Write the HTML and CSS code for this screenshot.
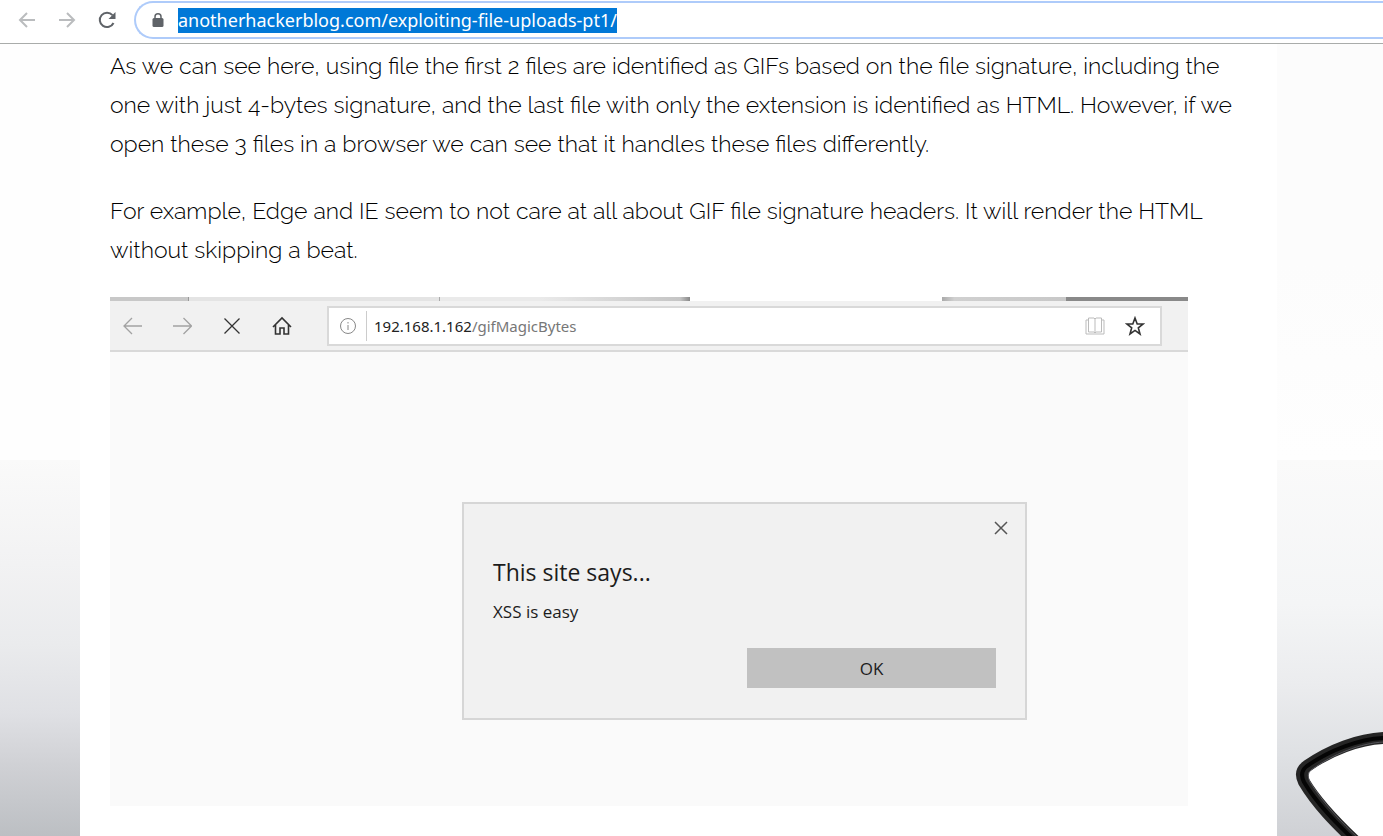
FILE: index.html
```html
<!DOCTYPE html>
<html lang="en">
<head>
<meta charset="utf-8">
<meta name="viewport" content="width=device-width, initial-scale=1">
<title>Exploiting File Uploads Pt. 1</title>
<link rel="stylesheet" href="styles.css">
</head>
<body>
<header class="browser-bar">
  <nav class="browser-nav" aria-label="Browser">
    <button class="icon-button muted" type="button" aria-label="Back"><svg width="18" height="18" viewBox="0 0 18 18"><path d="M17 9H2M9 2L2 9l7 7"/></svg></button>
    <button class="icon-button muted" type="button" aria-label="Forward"><svg width="18" height="18" viewBox="0 0 18 18"><path d="M1 9h15M9 2l7 7-7 7"/></svg></button>
    <button class="icon-button" type="button" aria-label="Reload"><svg width="18" height="18" viewBox="0 0 18 18"><path d="M15.500 12A7.200 7.200 0 1 1 14.500 4.200"/><path class="solid" d="M17.500 1v7h-7z"/></svg></button>
  </nav>
  <div class="omnibox">
    <svg class="lock" width="12" height="14" viewBox="0 0 12 14"><rect x="0.500" y="5" width="11" height="9" rx="1.500" fill="#5f6368"/><path d="M3 6V3.800a3 3 0 0 1 6 0V6" fill="none" stroke="#5f6368" stroke-width="1.500"/></svg>
    <input class="address" type="text" aria-label="Address" value="anotherhackerblog.com/exploiting-file-uploads-pt1/" spellcheck="false" autofocus>
  </div>
</header>
<div class="page">
  <div class="backdrop backdrop-left"></div>
  <main class="article">
    <p>As we can see here, using file the first 2 files are identified as GIFs based on the file signature, including the<br>one with just 4-bytes signature, and the last file with only the extension is identified as HTML. However, if we<br>open these 3 files in a browser we can see that it handles these files differently.</p>
    <p>For example, Edge and IE seem to not care at all about GIF file signature headers. It will render the HTML<br>without skipping a beat.</p>
    <section class="edge" aria-label="Edge window">
      <div class="edge-tabs"><i class="tab-a"></i><i class="tab-b"></i><i class="tab-c"></i><i class="tab-d"></i><i class="tab-e"></i><i class="tab-f"></i></div>
      <div class="edge-bar">
        <div class="edge-nav">
          <button class="edge-button faded" type="button" aria-label="Back"><svg width="20" height="20" viewBox="0 0 20 20"><path d="M20 10H2M10 2l-8 8 8 8"/></svg></button>
          <button class="edge-button faded" type="button" aria-label="Forward"><svg width="20" height="20" viewBox="0 0 20 20"><path d="M1 10H19.500M11.500 2l8 8-8 8"/></svg></button>
          <button class="edge-button" type="button" aria-label="Stop"><svg width="20" height="20" viewBox="0 0 20 20"><path d="M2.500 2.500l15 15M17.500 2.500l-15 15"/></svg></button>
          <button class="edge-button home" type="button" aria-label="Home"><svg width="20" height="20" viewBox="0 0 20 20"><path d="M1 11l9-9 9 9M3.500 9v9h4.500v-6h4v6h4.500V9"/></svg></button>
        </div>
        <div class="edge-address">
          <svg class="info" width="18" height="18" viewBox="0 0 18 18"><circle cx="9" cy="9" r="7.500"/><path d="M9 8v5M9 5v1.500"/></svg>
          <a class="edge-url" href="#"><span>192.168.1.162</span>/gifMagicBytes</a>
          <button class="edge-button book" type="button" aria-label="Reading view"><svg width="20" height="20" viewBox="0 0 20 20"><path d="M3.500 2H9l1 1 1-1h5.500v14H11l-1 1-1-1H3.500zM10 3v14M3.500 4H1v14h18V4h-2.500"/></svg></button>
          <button class="edge-button star" type="button" aria-label="Add to favorites"><svg width="20" height="20" viewBox="0 0 20 20"><path d="M10 2l2.200 6H18l-4.700 3.800L15 18l-5-3.600L5 18l1.700-6.200L2 8h5.800z"/></svg></button>
        </div>
      </div>
      <div class="edge-view">
        <div class="alert" role="dialog" aria-labelledby="alert-title">
          <button class="alert-close" type="button" aria-label="Close"><svg width="14" height="14" viewBox="0 0 14 14"><path d="M1 1l12 12M13 1L1 13"/></svg></button>
          <h2 id="alert-title">This site says...</h2>
          <p class="alert-text">XSS is easy</p>
          <button class="alert-ok" type="button">OK</button>
        </div>
      </div>
    </section>
  </main>
  <div class="backdrop backdrop-right">
    <svg class="glasses" width="106" height="120" viewBox="0 0 106 120">
      <path fill="#fff" d="M106 23C82 23 52 34 30 50Q24 57 29 67C43 89 60 107 76 122H106z"/>
      <path class="rim" d="M107 22C82 23 53 34 30 50Q22 56 27 66C40 88 59 107 78 125"/>
      <path class="rim-shade" d="M107 22C82 23 53 34 30 50Q22 56 27 66C40 88 59 107 78 125"/>
      <path class="rim-light" d="M107 26C84 27 56 38 34 54Q29 58 33 66C46 87 64 106 83 124"/>
    </svg>
  </div>
</div>
<script src="script.js"></script>
</body>
</html>
```
FILE: styles.css
```css
* { box-sizing: border-box; }
body {
  display: flex;
  flex-direction: column;
  min-height: 100vh;
  margin: 0;
  overflow-x: hidden;
  background: #fff;
  color: #1c1c1c;
  font-family: "Open Sans", "Noto Sans", sans-serif;
}
button { padding: 0; border: 0; background: none; font: inherit; color: inherit; }
svg { display: block; }
.browser-bar {
  display: flex;
  gap: 18px;
  height: 44px;
  padding: 1px 0 4px 18px;
  border-bottom: 1px solid #a9acaa;
}
.browser-nav { display: flex; align-items: center; gap: 22px; }
.icon-button svg { fill: none; stroke: #5f6368; stroke-width: 2; }
.icon-button.muted svg { stroke: #babcbe; }
.icon-button .solid { fill: #5f6368; stroke: none; }
.omnibox {
  display: flex;
  flex: 1;
  align-items: center;
  gap: 14px;
  height: 38px;
  padding-left: 16px;
  border: 2px solid #aecbfa;
  border-right: 0;
  border-radius: 19px 0 0 19px;
}
.address {
  flex: 1;
  min-width: 0;
  height: 25px;
  padding: 0;
  border: 0;
  outline: 0;
  background: none;
  font: 18px/25px "Noto Sans", "Open Sans", sans-serif;
  color: #222;
}
.address::selection { background: #0078d7; color: #fff; }
.page { display: grid; flex: 1; grid-template-columns: 80px 1fr 106px; }
.backdrop-left {
  background: linear-gradient(#fefefe 416px, #fafafa 416px, #f2f2f3 520px, #eaebed 600px, #dfe0e4 670px, #d0d1d5 720px, #bcbfc3 792px);
}
.backdrop-right {
  display: flex;
  align-items: flex-end;
  background: linear-gradient(#fcfcfc 220px, #fefefe 416px, #fafafa 416px, #f4f5f6 560px, #ebecee 640px, #dfe1e4 710px, #cfd1d5 792px);
}
.glasses { fill: none; }
.rim { stroke: #252525; stroke-width: 12; }
.rim-shade { stroke: #050505; stroke-width: 4; }
.rim-light { stroke: #55555a; stroke-width: 1; }
.article { padding: 2px 30px 30px; }
.article > p {
  margin: 0 0 28px;
  font: 300 23px/39px Raleway, Lato, sans-serif;
  color: #000;
  white-space: nowrap;
}
.edge { max-width: 1078px; background: #fafafa; }
.edge-tabs { display: grid; grid-template-columns: 79fr 251fr 250fr 252fr 124fr 122fr; height: 4px; background: #eee; }
.tab-a { background: #c8c8c8; border-right: 1px solid #999; }
.tab-b { background: #e4e4e4; border-right: 1px solid #aaa; }
.tab-c { background: linear-gradient(90deg, #eaeaea 40%, #c5c5c5 96%, #888); }
.tab-d { background: #fff; }
.tab-e { background: linear-gradient(90deg, #aaa, #d0d0d0 10%, #c8c8c8); }
.tab-f { background: #898989; }
.edge-bar {
  display: flex;
  align-items: center;
  gap: 35px;
  height: 51px;
  padding: 0 26px 0 12px;
  border-bottom: 2px solid #d9d9d9;
  background: #f1f1f1;
}
.edge-nav { display: flex; gap: 30px; }
.edge-button svg { fill: none; stroke: #333; stroke-width: 1.3; }
.edge-button.faded svg { stroke: #a2a2a2; }
.edge-button.home svg { stroke-width: 1.6; }
.edge-button.book svg { stroke: #bbb; stroke-width: 1; }
.edge-button.star svg { stroke-width: 1.6; }
.edge-address {
  display: flex;
  flex: 1;
  align-items: center;
  gap: 20px;
  height: 40px;
  padding: 0 15px 0 10px;
  border: 2px solid #d9d9d9;
  background: #fff;
}
.info { fill: none; stroke: #888; stroke-width: 1; }
.edge-url {
  flex: 1;
  margin-left: -11px;
  padding-left: 7px;
  border-left: 1px solid #ccc;
  font-family: "Noto Sans", "Open Sans", sans-serif;
  font-size: 15px;
  line-height: 30px;
  color: #777;
  text-decoration: none;
}
.edge-url span { color: #222; }
.edge-view { padding: 150px 161px 86px 352px; }
.alert {
  display: flex;
  flex-direction: column;
  height: 218px;
  padding: 16px 29px 30px;
  border: 2px solid #d6d6d6;
  background: #f1f1f1;
}
.alert-close { align-self: flex-end; margin-right: -12px; }
.alert-close svg { margin: 1px 0 0; fill: none; stroke: #555; stroke-width: 1.5; }
.alert h2 { margin: 21px 0 0; font-size: 23px; font-weight: 400; line-height: 32px; }
.alert-text { margin: 12px 0 0; font-size: 17px; line-height: 24px; }
.alert-ok { align-self: flex-end; width: 249px; height: 40px; margin-top: auto; background: #c1c1c1; font-size: 17px; }
```
FILE: script.js
```js
const address = document.querySelector(".address");
address.focus();
address.select();
```
